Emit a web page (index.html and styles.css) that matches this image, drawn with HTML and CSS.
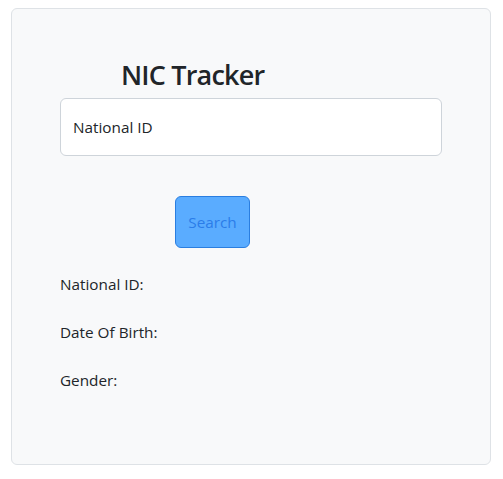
FILE: index.html
```html
<!DOCTYPE html>
<html>
<head>
<meta charset="utf-8">
<link rel="stylesheet" href="styles.css">
</head>
<body>
<div class="card">
  <h2 class="title">NIC Tracker</h2>
  <div class="field">National ID</div>
  <button class="btn">Search</button>
  <div class="results">
    <p class="row">National ID:</p>
    <p class="row">Date Of Birth:</p>
    <p class="row">Gender:</p>
  </div>
</div>
</body>
</html>
```
FILE: styles.css
```css
* { box-sizing: border-box; }
body {
  margin: 0;
  padding: 8px 0 0 11px;
  background: #fff;
  font-family: "Open Sans", "Noto Sans", sans-serif;
  color: #212529;
}
.card {
  width: 480px;
  height: 457px;
  background: #f8f9fa;
  border: 1px solid #dee2e6;
  border-radius: 6px;
  padding: 46px 0 0 48px;
  display: flex;
  flex-direction: column;
  align-items: flex-start;
}
.title {
  margin: 0 0 0 61px;
  font-size: 27px;
  font-weight: 600;
  line-height: 40px;
  letter-spacing: -0.8px;
}
.field {
  margin-top: 3px;
  width: 382px;
  height: 58px;
  background: #fff;
  border: 1px solid #ced4da;
  border-radius: 6px;
  padding: 0 12px;
  display: flex;
  align-items: center;
  font-size: 15.3px;
}
.btn {
  margin: 40px 0 0 115px;
  width: 75px;
  height: 52px;
  background: #5aacff;
  border: 1px solid #2a7ee0;
  border-radius: 6px;
  color: #2b7de9;
  font-family: inherit;
  font-size: 15.3px;
}
.results {
  margin-top: 24px;
  display: flex;
  flex-direction: column;
  gap: 24px;
}
.row {
  margin: 0;
  font-size: 15.3px;
  line-height: 24px;
}
```
